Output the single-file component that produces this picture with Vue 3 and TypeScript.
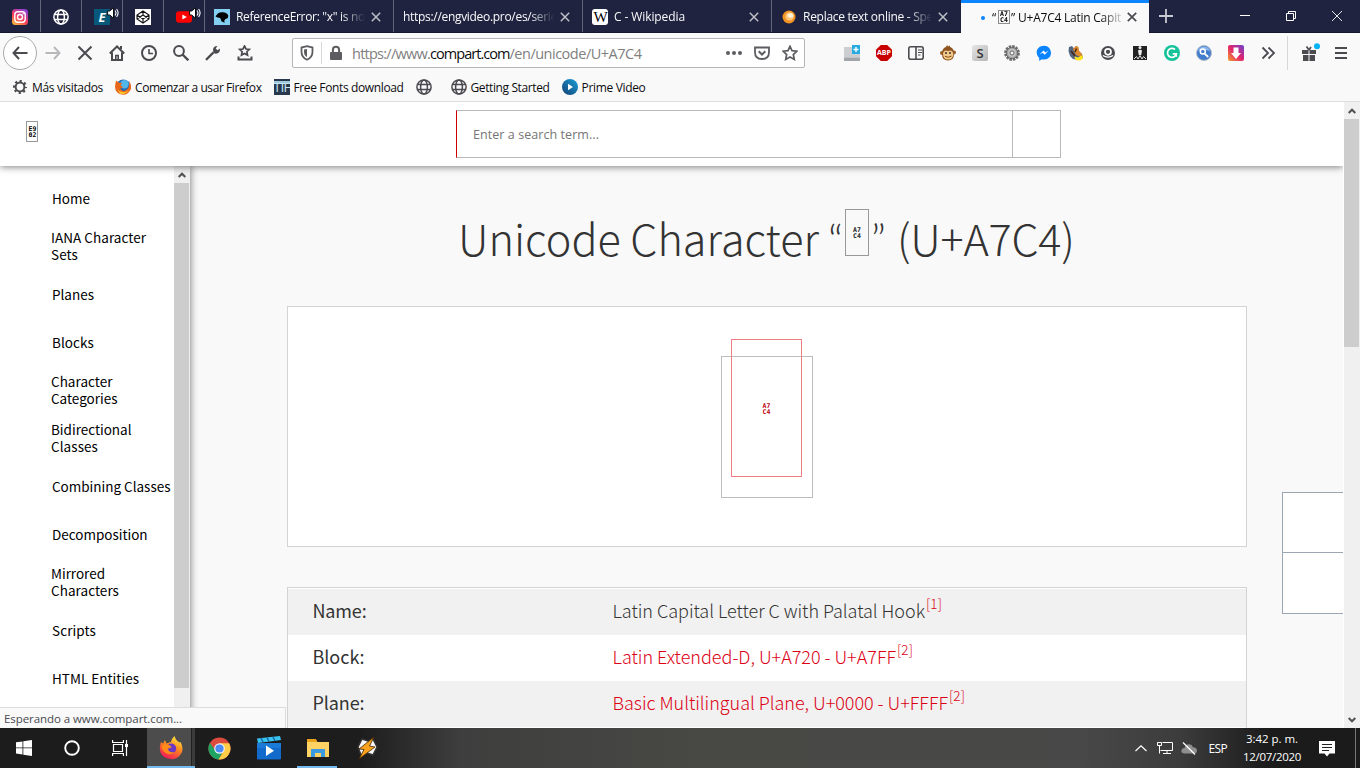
<script setup lang="ts">
import type { ObjectDirective } from 'vue'

// Spreads a label's letters so that it takes the given width in pixels.
const vFit: ObjectDirective<HTMLElement, number> = {
  mounted(el, binding) {
    const natural = el.getBoundingClientRect().width
    const count = (el.textContent ?? '').trim().length
    if (count > 0) el.style.letterSpacing = `${(binding.value - natural) / count}px`
  },
}

interface Tab { id: string; title: string; width: number }
const tabs: Tab[] = [
  { id: 'js', title: 'ReferenceError: "x" is not', width: 133 },
  { id: 'plain', title: 'https://engvideo.pro/es/serie', width: 154 },
  { id: 'wiki', title: 'C - Wikipedia', width: 71 },
  { id: 'orange', title: 'Replace text online - Spe', width: 130 },
]

interface MenuItem { lines: { text: string; width: number }[] }
const one = (text: string, width: number): MenuItem => ({ lines: [{ text, width }] })
const two = (a: string, aw: number, b: string, bw: number): MenuItem => ({
  lines: [{ text: a, width: aw }, { text: b, width: bw }],
})
const menu: MenuItem[] = [
  one('Home', 38),
  two('IANA Character', 95, 'Sets', 27),
  one('Planes', 42),
  one('Blocks', 42),
  two('Character', 61.5, 'Categories', 66.5),
  two('Bidirectional', 80.5, 'Classes', 47),
  one('Combining Classes', 118.5),
  one('Decomposition', 95.5),
  two('Mirrored', 54, 'Characters', 68),
  one('Scripts', 44),
  one('HTML Entities', 87),
]

const rows = [
  { label: 'Name:', lw: 54, value: 'Latin Capital Letter C with Palatal Hook', vw: 312.5, note: '[1]', link: false },
  { label: 'Block:', lw: 52, value: 'Latin Extended-D, U+A720 - U+A7FF', vw: 283.5, note: '[2]', link: true },
  { label: 'Plane:', lw: 52, value: 'Basic Multilingual Plane, U+0000 - U+FFFF', vw: 335.5, note: '[2]', link: true },
]
</script>

<template>
  <div class="screen">
    <div class="tabbar">
      <div class="pin">
        <svg width="16" height="16" viewBox="0 0 16 16">
          <defs>
            <linearGradient id="ig" x1="0.2" y1="1" x2="0.8" y2="0">
              <stop offset="0" stop-color="#ffb83f" /><stop offset=".4" stop-color="#fb3f57" /><stop offset="1" stop-color="#8a3fdc" />
            </linearGradient>
          </defs>
          <rect width="16" height="16" rx="3.5" fill="url(#ig)" />
          <rect x="2.8" y="2.8" width="10.4" height="10.4" rx="3" fill="none" stroke="#fff" stroke-width="1.4" />
          <circle cx="8" cy="8" r="2.5" fill="none" stroke="#fff" stroke-width="1.4" /><circle cx="11.2" cy="4.8" r=".7" fill="#fff" />
        </svg>
      </div>
      <div class="pin">
        <svg width="16" height="16" viewBox="0 0 16 16" fill="none" stroke="#fff" stroke-width="1.5">
          <circle cx="8" cy="8" r="7.1" /><ellipse cx="8" cy="8" rx="3.4" ry="7.1" /><path d="M1.5 5.5h13M1.5 10.5h13" />
        </svg>
      </div>
      <div class="pin">
        <span class="letter-e">E</span>
        <svg class="sound" width="12" height="12" viewBox="0 0 12 12"><path d="M.6 4h2.2L6.5.8v10.4L2.800 8H.6z" fill="#fff" stroke="#000" stroke-width=".9" /><path d="M8 3.5q2 2.5 0 5M9.600 2q3 4 0 8" fill="none" stroke="#fff" stroke-width="1.1" /></svg>
      </div>
      <div class="pin">
        <svg width="16" height="16" viewBox="0 0 16 16">
          <rect width="16" height="16" fill="#fff" />
          <path d="M8 2l6 4v4l-6 4-6-4V6zM8 2v4m0 4v4M2 6l6 4 6-4M2 10l6-4 6 4" fill="none" stroke="#111" stroke-width="1.1" />
        </svg>
      </div>
      <div class="pin">
        <svg width="16" height="16" viewBox="0 0 16 16"><rect y="2.3" width="16" height="11.4" rx="3" fill="#f00" /><path d="M6.4 5.4v5.2L10.8 8z" fill="#fff" /></svg>
        <svg class="sound" width="12" height="12" viewBox="0 0 12 12"><path d="M.6 4h2.2L6.5.8v10.4L2.800 8H.6z" fill="#fff" stroke="#000" stroke-width=".9" /><path d="M8 3.5q2 2.5 0 5M9.600 2q3 4 0 8" fill="none" stroke="#fff" stroke-width="1.1" /></svg>
      </div>
      <div v-for="t in tabs" :key="t.id" class="tab" :class="{ last: t.id === 'orange' }">
        <svg v-if="t.id === 'js'" class="fav" width="16" height="16" viewBox="0 0 16 16"><rect width="16" height="16" fill="#83d0f2" /><path d="M1.5 7.5Q4 3 8 3.2q5-.3 6.3 3.6l-.6 2.4-2.2.8-1.2 1.4.3 2.3-3.2-1.4L6.2 9 3.6 8.6z" fill="#000" /></svg>
        <svg v-else-if="t.id === 'orange'" class="fav" width="16" height="16" viewBox="0 0 16 16"><circle cx="8" cy="8" r="6.5" fill="#f39422" /><circle cx="8.6" cy="7.4" r="4.2" fill="#ffc77c" /><ellipse cx="9.5" cy="6.5" rx="2.8" ry="2.2" fill="#fff3d8" /></svg>
        <span v-else-if="t.id === 'wiki'" class="fav wiki">W</span>
        <span class="clip"><span v-fit="t.width" class="label">{{ t.title }}</span></span>
        <svg class="close" width="10" height="10" viewBox="0 0 10 10"><path d="M.8.8l8.4 8.4M9.2.8L.8 9.2" stroke="#bdbec6" stroke-width="1.5" /></svg>
      </div>
      <div class="tab active">
        <i class="dot"></i>
        <span class="clip"><span v-fit="5" class="label">“</span><span class="missing tiny">A7<br>C4</span><span v-fit="6" class="label">”</span><span v-fit="103" class="label after">U+A7C4 Latin Capit</span></span>
        <svg class="close" width="10" height="10" viewBox="0 0 10 10"><path d="M.8.8l8.4 8.4M9.2.8L.8 9.2" stroke="#4a4a4f" stroke-width="1.7" /></svg>
      </div>
      <svg class="plus" width="14" height="14" viewBox="0 0 14 14"><path d="M7 0v14M0 7h14" stroke="#c9c9d1" stroke-width="1.8" /></svg>
      <div class="window-buttons">
        <svg width="10" height="10" viewBox="0 0 10 10" fill="none" stroke="#fff"><path d="M0 4.5h10" /></svg>
        <svg width="10" height="10" viewBox="0 0 10 10" fill="none" stroke="#fff"><path d="M.5 2.5h7v7h-7zM2.5 2.500V.5h7v7h-2" /></svg>
        <svg width="10" height="10" viewBox="0 0 10 10" fill="none" stroke="#fff"><path d="M0 0l10 10M10 0L0 10" stroke-width=".9" /></svg>
      </div>
    </div>

    <div class="navbar">
      <div class="back"><svg width="16" height="16" viewBox="0 0 16 16" fill="none" stroke="#4a4a4f" stroke-width="2"><path d="M15.500 8H1.500M7 2L1.500 8 7 14" /></svg></div>
      <div class="tools">
        <svg viewBox="0 0 16 16" fill="none" stroke="#b8b8bb" stroke-width="2"><path d="M.5 8h14M9 2l5.500 6L9 14" /></svg>
        <svg viewBox="0 0 16 16" fill="none" stroke="#4a4a4f" stroke-width="2"><path d="M1.500 1.500l13 13M14.500 1.500l-13 13" /></svg>
        <svg viewBox="0 0 16 16" fill="none" stroke="#4a4a4f" stroke-width="2"><path d="M.8 8.500L8 1.500l7.200 7M3 7.500V15h10V7.500" /><path d="M12 1v3" /><path d="M6.800 15v-4.500h2.400V15" stroke-width="1.600" /></svg>
        <svg viewBox="0 0 16 16" fill="none" stroke="#4a4a4f" stroke-width="2"><circle cx="8" cy="8" r="7" /><path d="M8 4v4.500h4" stroke-width="1.600" /></svg>
        <svg viewBox="0 0 16 16" fill="none" stroke="#4a4a4f" stroke-width="2"><circle cx="6" cy="6" r="4.900" /><path d="M9.500 9.500l5.800 5.800" stroke-width="2.300" /></svg>
        <svg viewBox="0 0 16 16"><path d="M1 14.900L8.500 7.400" stroke="#4a4a4f" stroke-width="2.200" /><path d="M8 5Q8 1.200 12.500 1L10.700 3.400l1.800 1.800L15 3.500q.2 4.700-4 5.300-2.800.2-3-3.800" fill="#4a4a4f" /></svg>
        <svg viewBox="0 0 16 16" fill="none" stroke="#4a4a4f" stroke-width="1.700"><path d="M7.500 1l1.500 3 3.300.4L9.900 6.700l.6 3.400-3-1.700-3 1.700.6-3.400-2.400-2.300L6 4z" /><path d="M1.500 11.500v3h13v-3" stroke-width="2" /></svg>
      </div>
      <div class="url">
        <svg class="shield" viewBox="0 0 16 16"><path d="M8 1.200l5.500 1.300v4.300q0 5.500-5.500 8-5.500-2.500-5.500-8V2.500z" fill="none" stroke="#5d5d61" stroke-width="1.800" /><path d="M8 4v8Q5 10.500 5 7V4.600z" fill="#5d5d61" /></svg>
        <i class="rule"></i>
        <svg class="lock" viewBox="0 0 16 16"><rect x="2" y="7" width="12" height="8" rx="1" fill="#5d5d61" /><path d="M4.900 8V5q0-3.200 3.100-3.200T11.100 5v3" fill="none" stroke="#5d5d61" stroke-width="2" /></svg>
        <span class="address"><span v-fit="78">https://www.</span><b v-fit="79.5">compart.com</b><span v-fit="132">/en/unicode/U+A7C4</span></span>
        <svg class="dots" viewBox="0 0 16 16" fill="#5d5d61"><circle cx="2" cy="8" r="2" /><circle cx="8" cy="8" r="2" /><circle cx="14" cy="8" r="2" /></svg>
        <svg viewBox="0 0 16 16" fill="none" stroke="#5d5d61" stroke-width="1.800"><path d="M1 2.500h14v4.700q0 6.600-7 6.800-7-.2-7-6.800z" /><path d="M4.700 6.300L8 9.500l3.300-3.200" stroke-width="2" /></svg>
        <svg viewBox="0 0 16 16" fill="none" stroke="#5d5d61" stroke-width="1.700"><path d="M8 1.300l2 4.400 4.900.5-3.600 3.300 1 4.900L8 12l-4.300 2.400 1-4.900L1.100 6.200 6 5.700z" /></svg>
      </div>
      <div class="extensions">
        <svg viewBox="0 0 16 16"><path d="M0 2h16v10.500H0z" fill="#ccced1" /><path d="M0 12.500h16V16H0z" fill="#a2a5aa" /><path d="M8 0h8v9H8z" fill="#26ace2" /><path d="M12 2v5M9.500 4.500h5" stroke="#fff" stroke-width="1.400" /></svg>
        <span class="abp">ABP</span>
        <svg viewBox="0 0 16 16" fill="none" stroke="#4a4a4f" stroke-width="1.600"><rect x=".8" y="1.800" width="14.400" height="12.400" rx="2" /><path d="M8 2v12" /><path d="M10 5h4M10 7.500h4M10 10h2.500" stroke-width="1" /></svg>
        <svg viewBox="0 0 16 16"><circle cx="2" cy="8" r="2" fill="#9b6029" /><circle cx="14" cy="7.500" r="2" fill="#9b6029" /><path d="M2 9Q2 3 6 2L7 0l1 1.500L10 .5V2q4 1 4 7 0 6.500-6 6.500T2 9" fill="#8e541f" /><path d="M3 8.500q1-4.500 5-2.500 4-2 5.300 2.500 0 6-5.300 6-5 0-5-6" fill="#f2c98c" /><path d="M6 7v2M10 7v2" stroke="#222" stroke-width="1.300" /><path d="M5 11.300q3 2 6.500-.2" fill="none" stroke="#87500d" /></svg>
        <span class="s-icon">S</span>
        <svg viewBox="0 0 16 16"><circle cx="8" cy="8" r="6.600" fill="none" stroke="#6c6e70" stroke-width="2.600" stroke-dasharray="2.456 1" /><circle cx="8" cy="8" r="5.800" fill="#a0a0a0" stroke="#666" /><circle cx="8" cy="8" r="4" fill="#c4c4c4" /><circle cx="8" cy="8" r="2" fill="#f4f4f4" stroke="#666" /></svg>
        <svg viewBox="0 0 16 16"><path d="M8 .8c-4.300 0-7.300 2.900-7.300 6.700 0 2.200 1 4 2.500 5.200V16l2.600-1.700q5 .9 7.600-2c3.500-4 1-11.500-5.400-11.500" fill="#0a84ff" /><path d="M3.500 9.600l4-4.200 2 2 3.200-1.800-4 4.200-2-2z" fill="#fff" /></svg>
        <svg viewBox="0 0 16 16"><path d="M1 2l3-1 2 2.500L8 1l2 1 1 4 3 3 1 4-4 2-6-1-3-3L.5 6z" fill="#52677f" /><path d="M5 4l3-3 2.500 1 .5 4 3 3-1 3-5-2z" fill="#e08a2c" /><path d="M3 6l4 5M8.500 3.500L7 7" stroke="#4a2413" stroke-width="1.500" /><path d="M6.500 11.500l3.500 1 4.500-2.500q1.500 5-3.500 5.500-4.500 0-4.500-4" fill="#ffe51b" /></svg>
        <svg viewBox="0 0 16 16"><circle cx="8" cy="8" r="7" fill="#4a4a4f" /><circle cx="8" cy="6.800" r="3" fill="none" stroke="#fff" stroke-width="1.700" /><path d="M2.800 10.500q5 3.200 10.400 0" fill="none" stroke="#fff" stroke-width="1.400" /></svg>
        <svg viewBox="0 0 16 16"><rect x="1" y="1" width="14" height="14" fill="#222" /><circle cx="8" cy="2.500" r="1.500" fill="#eee" /><path d="M6 5.500L8 4.500l2 1-.8 4.500H6.800z" fill="#eee" /><path d="M2 14l2.500-2.500L6 14l2-3.500 2 3.500 1.500-2.500L14 14" fill="none" stroke="#ddd" stroke-width="1" /></svg>
        <svg viewBox="0 0 16 16"><circle cx="8" cy="8" r="8" fill="#15c39a" /><path d="M11 4.500A4.500 4.500 0 1 0 12.400 8.800H8.700m3.500-.5v3.400" fill="none" stroke="#fff" stroke-width="1.700" /></svg>
        <svg viewBox="0 0 16 16"><circle cx="8" cy="8" r="7.500" fill="#427dcc" stroke="#b3bdc9" /><path d="M2 6q1-4 6-4.400 5 .4 6 4.400-6-2-12 0" fill="#88b6ed" /><circle cx="6.800" cy="6.600" r="2.500" fill="none" stroke="#fff" stroke-width="1.500" /><path d="M8.700 8.600l3.500 3.400" stroke="#fff" stroke-width="1.800" /></svg>
        <svg viewBox="0 0 16 16"><defs><linearGradient id="dl" x1="0" y1="1" x2="1" y2="0"><stop offset="0" stop-color="#f7a02c" /><stop offset=".5" stop-color="#e1246b" /><stop offset="1" stop-color="#6d42d2" /></linearGradient></defs><rect width="16" height="16" rx="2" fill="url(#dl)" /><path d="M5.500 2.500h5V8H13l-5 6-5-6h2.500z" fill="#fff" /></svg>
        <svg viewBox="0 0 16 16" fill="none" stroke="#4a4a4f" stroke-width="1.800"><path d="M2.500 2.500L8 8l-5.500 5.500M8.500 2.500L14 8l-5.500 5.500" /></svg>
      </div>
      <i class="nav-rule"></i>
      <svg class="gift" viewBox="0 0 20 20"><path d="M2 7h6.500v4H2zM9.500 7H16v4H9.500zM3 12h5.500v6H3zM9.500 12H15v6H9.500z" fill="#4a4a4f" /><path d="M9 7L6.500 3.500M9 7l2-3" stroke="#4a4a4f" stroke-width="1.700" /><circle cx="17" cy="3.300" r="3" fill="#00b3f4" /></svg>
      <svg class="burger" width="12" height="12" viewBox="0 0 12 12"><path d="M0 1h12M0 6h12M0 11h12" stroke="#4a4a4f" stroke-width="1.800" /></svg>
    </div>

    <div class="bookmarks">
      <div class="mark"><svg viewBox="0 0 16 16"><circle cx="8" cy="8" r="4.400" fill="none" stroke="#4a4a4f" stroke-width="2" /><circle cx="8" cy="8" r="5.900" fill="none" stroke="#4a4a4f" stroke-width="2.300" stroke-dasharray="2.100 2.534" stroke-dashoffset="1.050" /></svg><span v-fit="71">Más visitados</span></div>
      <div class="mark"><svg viewBox="0 0 16 16"><circle cx="8.300" cy="7.600" r="7.200" fill="#246bb5" /><circle cx="9.500" cy="5.200" r="4.200" fill="#53b6e8" /><path d="M1 1.500Q3 4 7 4L5.600 6.500 8 8q-2 2-3 1.500 3 4.500 7.500.5Q15 7 14 2q3.500 5 1.200 9.500Q12 16.500 6.500 15.600-.8 13.600.2 6z" fill="#e9651a" /><path d="M2 10q5 6 12 1-4 5.500-9 3.500" fill="#ffc62d" /></svg><span v-fit="126.5">Comenzar a usar Firefox</span></div>
      <div class="mark"><span class="ttf">TTF</span><span v-fit="110">Free Fonts download</span></div>
      <div class="mark lone"><svg viewBox="0 0 16 16" fill="none" stroke="#4a4a4f" stroke-width="1.500"><circle cx="8" cy="8" r="7.100" /><ellipse cx="8" cy="8" rx="3.400" ry="7.100" /><path d="M1.500 5.500h13M1.500 10.500h13" /></svg></div>
      <div class="mark"><svg viewBox="0 0 16 16" fill="none" stroke="#4a4a4f" stroke-width="1.500"><circle cx="8" cy="8" r="7.100" /><ellipse cx="8" cy="8" rx="3.400" ry="7.100" /><path d="M1.500 5.500h13M1.500 10.500h13" /></svg><span v-fit="79">Getting Started</span></div>
      <div class="mark"><svg viewBox="0 0 16 16"><defs><linearGradient id="pv" x1="0" y1="1" x2="1" y2="0"><stop offset="0" stop-color="#143f73" /><stop offset="1" stop-color="#1aa0d8" /></linearGradient></defs><circle cx="8" cy="8" r="8" fill="url(#pv)" /><path d="M6 4.800v6.400L11 8z" fill="#fff" /></svg><span v-fit="64">Prime Video</span></div>
    </div>

    <div class="viewport">
      <div class="page">
        <header class="site-header">
          <span class="missing logo">E9<br>02</span>
          <div class="search"><span v-fit="126" class="placeholder">Enter a search term...</span><i class="go"></i></div>
        </header>
        <div class="body">
          <aside class="sidebar">
            <nav>
              <div v-for="(m, i) in menu" :key="i" class="item" :class="{ pair: m.lines.length > 1 }">
                <div v-for="l in m.lines" :key="l.text" class="line"><span v-fit="l.width">{{ l.text }}</span></div>
              </div>
            </nav>
            <div class="scroll inner"><div class="arrow"><svg width="8" height="6" viewBox="0 0 8 6"><path d="M.7 5L4 1.700 7.300 5" fill="none" stroke="#505050" stroke-width="2" /></svg></div><div class="thumb"></div></div>
          </aside>
          <main>
            <h1><span v-fit="360" class="t1">Unicode Character</span><span class="quote open-quote">“</span><span class="missing mid">A7<br>C4</span><span class="quote">”</span><span v-fit="177.5" class="t2">(U+A7C4)</span></h1>
            <section class="preview">
              <div class="outer"><div class="missing big">A7<br>C4</div></div>
            </section>
            <section class="facts">
              <div v-for="r in rows" :key="r.label" class="fact">
                <div class="name"><span v-fit="r.lw">{{ r.label }}</span></div>
                <div class="value" :class="{ link: r.link }"><span v-fit="r.vw">{{ r.value }}</span><sup v-fit="16">{{ r.note }}</sup></div>
              </div>
            </section>
          </main>
        </div>
        <div class="float"><div></div><div></div></div>
      </div>
      <div class="scroll outer-scroll">
        <div class="arrow"><svg width="8" height="6" viewBox="0 0 8 6"><path d="M.7 5L4 1.700 7.300 5" fill="none" stroke="#505050" stroke-width="2" /></svg></div>
        <div class="thumb"></div>
        <div class="arrow down"><svg width="8" height="6" viewBox="0 0 8 6"><path d="M.7 1L4 4.300 7.300 1" fill="none" stroke="#505050" stroke-width="2" /></svg></div>
      </div>
      <div class="status"><span v-fit="178">Esperando a www.compart.com...</span></div>
    </div>

    <div class="taskbar">
      <div class="task"><svg width="16" height="16" viewBox="0 0 16 16" fill="#fff"><path d="M0 2.300l6.500-.9v6.100H0zM7.300 1.300L16 0v7.500H7.300zM0 8.300h6.500v6.200L0 13.600zM7.300 8.300H16V16l-8.700-1.300z" /></svg></div>
      <div class="task"><svg width="16" height="16" viewBox="0 0 16 16"><circle cx="8" cy="8" r="6.800" fill="none" stroke="#fff" stroke-width="1.900" /></svg></div>
      <div class="task"><svg width="17" height="16" viewBox="0 0 17 16" fill="none" stroke="#fff" stroke-width="1.200"><path d="M1.500 4.500h9v7h-9zM.6 0v2.500h10.800V0M.6 16v-2.500h10.800V16M14.500 0v16" /><path d="M13 4h3v3h-3z" fill="#fff" stroke="none" /></svg></div>
      <div class="task current">
        <svg width="24" height="24" viewBox="0 0 24 24"><defs><linearGradient id="fx" x1=".8" y1="0" x2=".3" y2="1"><stop offset="0" stop-color="#fff044" /><stop offset=".45" stop-color="#ff8a1e" /><stop offset="1" stop-color="#f0155c" /></linearGradient></defs><path d="M2 6l2 1.500L6 4l1.500 3.500L12 6q1-4 3.500-6 1 4 5 6.500l1-.5q3.500 6 1 11Q18.500 24 11.500 23 1.500 22 .8 13 .8 9 2 6" fill="url(#fx)" /><circle cx="12.200" cy="12.500" r="5" fill="#6b37c5" /><path d="M3 9q5-1.500 8 .5l2 1.800-4.200 1.500q1 4.500 7 3.200-5 4-9.500.8Q2 13 3 9" fill="#ff8b19" /></svg>
        <i></i>
      </div>
      <div class="task wide"><svg width="23" height="23" viewBox="0 0 24 24"><circle cx="12" cy="12" r="11.500" fill="#dd4b3e" /><path d="M2 6.200A11.500 11.500 0 0 0 11 23.500l5-9-8 0z" fill="#1da462" /><path d="M12 6.500h10A11.500 11.500 0 0 1 11 23.500l5.500-9z" fill="#ffcd46" /><circle cx="12" cy="12" r="5.500" fill="#f5f5f5" /><circle cx="12" cy="12" r="4.300" fill="#4c8bf5" /></svg></div>
      <div class="task wide"><svg width="24" height="24" viewBox="0 0 24 24"><path d="M0 7h24v15.500q0 1-1 1H1q-1 0-1-1z" fill="#126bca" /><path d="M0 2.500L23 0l1 4L1 7z" fill="#38c4ee" /><path d="M4 2l2 4M10 1.500l2 4M16 1l2 4" stroke="#176bae" stroke-width="1.500" /><path d="M0 7h24v5H0z" fill="#1b7ad8" /><path d="M9 9.500v10.500l8-5.200z" fill="#fff" /></svg></div>
      <div class="task wide open"><svg width="22" height="19" viewBox="0 0 22 19"><path d="M0 1h9l1.500 2H22v15H0z" fill="#ffd363" /><path d="M0 0h9l1 3H0z" fill="#e9a21b" /><path d="M4 10h14v8h-4v-4H8v4H4z" fill="#3c9be0" /></svg></div>
      <div class="task wide"><svg width="24" height="24" viewBox="0 0 24 24"><path d="M7 3l6 2 5-2 4 8-4 8-6-2-6 2-3-8z" fill="#f6f6f6" stroke="#333" stroke-width="1.500" /><path d="M19 1L4 13l5 .5L4 23l16-12-5.500-1z" fill="#f8a21d" stroke="#432200" stroke-width=".8" /></svg></div>
      <div class="tray">
        <svg width="12" height="7" viewBox="0 0 12 7"><path d="M.5 6L6 .8 11.500 6" fill="none" stroke="#fff" stroke-width="1.200" /></svg>
        <svg class="net" width="16" height="14" viewBox="0 0 16 14" fill="none" stroke="#fff"><path d="M5.500 1.500h10v8H3.500M10 9.500v3M6 12.500h8M2.500 5v7.500M.5 1.500h4v3h-4z" /></svg>
        <svg class="cloud" width="16" height="13" viewBox="0 0 16 13"><path d="M3 11.500q-3-.5-2.600-3.200Q1 6 3.500 6 4.500 2 8 2.200q3 .2 4 3 3.500 0 4 3.200 0 3-3 3.100z" fill="#8f8f8f" /><path d="M2 .5l12 12" stroke="#fff" stroke-width="1.300" /></svg>
        <span v-fit="18.5" class="esp">ESP</span>
        <div class="clock"><div><span v-fit="52">3:42 p. m.</span></div><div><span v-fit="58">12/07/2020</span></div></div>
        <svg class="notes" width="16" height="16" viewBox="0 0 16 16"><path d="M0 0h16v12.500h-5.500L8 15.500l-2.500-3H0z" fill="#fff" /><path d="M3 3.500h10M3 6.500h10M3 9.500h7" stroke="#222" /></svg>
        <i class="peek"></i>
      </div>
    </div>
  </div>
</template>

<style>
body { margin: 0; overflow: hidden; }
</style>

<style scoped>
* { box-sizing: border-box; }
.screen { width: 1360px; height: 768px; display: flex; flex-direction: column; overflow: hidden; font-family: "Open Sans", "Noto Sans", sans-serif; font-size: 12px; color: #0c0c0d; }
.screen span, .screen b, .screen sup { white-space: nowrap; }
svg { flex: none; display: block; }

.tabbar { height: 33px; flex: none; display: flex; background: #202340; border-bottom: 1px solid #15172c; }
.pin { width: 41px; height: 32px; border-right: 1px solid #63657a; display: flex; align-items: center; justify-content: center; padding-top: 2px; position: relative; flex: none; }
.letter-e { width: 16px; height: 16px; background: #07587a; color: #fff; font: italic 700 13px/16px "Open Sans", sans-serif; text-align: center; }
.sound { position: absolute; left: 25px; top: 7px; }
.tab { width: 189px; height: 32px; flex: none; border-right: 1px solid #63657a; display: flex; align-items: center; padding: 2px 12px 0 9px; color: #f9f9fa; }
.fav { width: 16px; height: 16px; flex: none; margin-right: 6px; }
.wiki { background: #fff; border-radius: 3px; color: #000; font: 15px/16px "Liberation Serif", serif; text-align: center; letter-spacing: -1px; }
.clip { flex: 1; overflow: hidden; display: flex; align-items: center; height: 20px; margin-right: 1px; mask-image: linear-gradient(to right, #000 calc(100% - 24px), transparent); }
.label { display: inline-block; line-height: 18px; }
.close { margin-left: 5px; }
.last { border-right: 0; padding-right: 13px; }
.active { width: 188px; height: 33px; background: #f9f9fa; border-right: 0; border-top: 3px solid #0a84ff; padding: 0 12px 1px 20px; color: #0c0c0d; }
.active .clip { mask-image: linear-gradient(to right, #000 calc(100% - 20px), rgba(0, 0, 0, .2)); }
.active .close { margin-top: -1px; }
.dot { width: 4px; height: 4px; border-radius: 50%; background: #0a84ff; margin-right: 7px; flex: none; }
.after { margin-left: 1px; }
.missing { flex: none; text-align: center; font-family: "DejaVu Sans Mono", monospace; font-size: 6.5px; line-height: 6px; font-weight: 700; border: 1px solid #8d8d8d; color: #000; display: inline-flex; align-items: center; justify-content: center; }
.tiny { width: 12px; height: 14px; margin: -2px 1px 0; }
.plus { margin: 9px 0 0 10px; }
.window-buttons { display: flex; gap: 36px; margin: 11px 18px 0 auto; }

.navbar { height: 40px; flex: none; background: #f9f9fa; display: flex; align-items: center; }
.back { width: 34px; height: 34px; border: 1px solid #aaa; border-radius: 50%; background: #fff; display: flex; align-items: center; justify-content: center; margin-left: 3px; flex: none; }
.tools { display: flex; gap: 16px; margin-left: 8px; }
.tools svg, .url svg, .extensions svg { width: 16px; height: 16px; }
.url { width: 513px; height: 30px; margin-left: 39px; border: 1px solid #b5b5b5; border-radius: 2px; background: #fff; display: flex; align-items: center; padding: 0 6px 0 6px; flex: none; }
.rule { width: 1px; height: 22px; background: #d7d7db; margin: 0 6px 0 6px; }
.address { flex: 1; margin-left: 8px; font-size: 14.5px; color: #808080; display: flex; }
.address b { font-weight: 400; color: #0c0c0d; }
.url svg + svg { margin-left: 12px; }
.extensions { display: flex; gap: 16px; margin-left: 39px; }
.abp, .s-icon { width: 16px; height: 16px; text-align: center; font: 700 7px/16px "Open Sans", sans-serif; color: #fff; }
.abp { background: #c80000; clip-path: polygon(30% 0, 70% 0, 100% 30%, 100% 70%, 70% 100%, 30% 100%, 0 70%, 0 30%); }
.s-icon { background: linear-gradient(135deg, #e6e6e6, #b4b4b4); border-radius: 2px; color: #333; font-size: 13px; font-weight: 600; }
.nav-rule { width: 1px; height: 34px; background: #d7d7db; margin-left: 11px; }
.gift { width: 20px; height: 20px; margin-left: 12px; }
.burger { margin-left: 15px; }

.bookmarks { height: 29px; flex: none; background: #f9f9fa; border-bottom: 1px solid #ddd; display: flex; padding: 0 0 0 12px; gap: 12px; align-items: center; }
.mark { display: flex; align-items: center; gap: 4px; }
.mark svg { width: 16px; height: 16px; }
.lone { margin: 0 7px 0 0; }
.ttf { width: 16px; height: 16px; background: #29394d; color: #c5e5f5; border-top: 2px solid #29394d; font: 400 12px/14px "Liberation Sans", sans-serif; letter-spacing: -2.2px; overflow: hidden; text-align: left; box-shadow: inset 0 2px #9fc9dd; }

.viewport { flex: 1; min-height: 0; display: flex; position: relative; background: #fff; }
.page { width: 1343px; display: flex; flex-direction: column; background: #f9f9f9; position: relative; font-family: "Noto Sans CJK SC", sans-serif; overflow: hidden; }
.site-header { height: 64px; flex: none; background: #fff; box-shadow: 0 1px 7px rgba(0, 0, 0, .5); z-index: 2; display: flex; align-items: flex-start; }
.logo { width: 12px; height: 21px; margin: 19px 0 0 26px; padding-left: 1px; border-color: #999; }
.search { width: 605px; height: 48px; margin: 8px 0 0 418px; border: 1px solid #b9b9b9; border-left-color: #c00; display: flex; align-items: center; }
.placeholder { margin-left: 16px; font: 12.5px "Open Sans", sans-serif; color: #757575; }
.go { margin-left: auto; width: 48px; height: 46px; border-left: 1px solid #b9b9b9; }
.body { flex: 1; display: flex; min-height: 0; }
.sidebar { width: 190px; background: #fff; flex: none; display: flex; box-shadow: 1px 0 7px rgba(0, 0, 0, .45); }
.sidebar nav { width: 174px; padding-top: 8px; overflow: hidden; height: 562px; }
.item { height: 48px; padding-left: 52px; display: flex; flex-direction: column; justify-content: center; font-size: 13.5px; line-height: 17px; color: #000; }
.line { height: 17px; }
.line span { display: inline-block; height: 17px; vertical-align: top; }
.pair { padding-left: 51px; }
.scroll { background: #f0f0f0; display: flex; flex-direction: column; }
.inner { width: 16px; }
.arrow { height: 17px; display: flex; align-items: center; justify-content: center; flex: none; }
.thumb { width: 15px; background: #cdcdcd; flex: none; }
.inner .thumb { height: 505px; }
.outer-scroll { width: 16px; margin-left: 1px; }
.outer-scroll .thumb { height: 228px; }
.down { margin-top: auto; }
main { width: 960px; margin-left: 97px; }
h1 { margin: 0; height: 140px; display: flex; align-items: flex-start; color: #333; font-size: 43.2px; font-weight: 300; line-height: 62px; padding: 40px 0 0 171px; }
h1 > span { flex: none; }
.t1 { width: 360px; }
.quote { width: 17px; font-family: Lato, sans-serif; font-size: 44px; line-height: 67px; text-align: center; }
.open-quote { margin-left: 9px; }
.mid { width: 24px; height: 47px; margin: 3px 1px 0 1px; border-color: #999; color: #222; }
.t2 { margin-left: 10px; }
.preview { height: 241px; background: #fff; border: 1px solid #d3d3d3; display: flex; justify-content: center; padding-top: 49px; }
.outer { width: 92px; height: 142px; border: 1px solid #bdbdbd; }
.big { width: 71px; height: 138px; margin: -18px 0 0 9px; padding-top: 1px; border-color: #ef7d84; color: #c00010; }
.facts { margin-top: 40px; background: #fff; border: 1px solid #d3d3d3; padding: 1px 0 2px; font-size: 18px; color: #333; }
.fact { height: 46px; display: flex; line-height: 42px; }
.fact:nth-child(odd) { background: #f1f1f1; }
.name { width: 324.5px; padding-left: 24.5px; }
.value { font-weight: 300; display: flex; }
.link, sup { color: #dc0014; }
sup { font-size: 13.5px; line-height: 29px; margin-left: 1px; height: 29px; }
.float { position: absolute; left: 1282px; top: 390px; width: 61px; height: 122px; border: 1px solid #9aa6b1; border-right: 0; background: #fff; }
.float div { height: 59px; }
.float div + div { border-top: 1px solid #9aa6b1; }
.status { position: absolute; left: 0; bottom: 0; z-index: 4; width: 286px; height: 21px; background: #f9f9fa; border-top: 1px solid #dcdcdc; border-right: 1px solid #dcdcdc; padding-left: 4px; line-height: 21px; font-size: 11.5px; color: #4a4a4f; }

.taskbar { height: 40px; flex: none; background: linear-gradient(90deg, #1c1c1c 0, #1d1d1d 360px, #3e3e3e 460px, #484844 700px, #484848 1080px, #3c3c3c 1180px, #1b1b1b 1270px); display: flex; color: #fff; }
.task { width: 48px; height: 40px; display: flex; align-items: center; justify-content: center; flex: none; }
.current { background: #4c4c4c; border-bottom: 2px solid #76b9ed; margin-left: 3px; position: relative; padding-top: 1px; }
.current i { position: absolute; right: 0; top: 0; width: 4px; height: 38px; background: #3b3b3b; border-left: 1px solid #202020; }
.wide { width: 49px; }
.open { position: relative; }
.open::after { content: ""; position: absolute; left: 4px; bottom: 0; width: 40px; height: 2px; background: #76b9ed; }
.tray { margin-left: auto; display: flex; align-items: center; }
.net { margin-left: 10px; }
.cloud { margin-left: 8px; }
.esp { margin-left: 12px; }
.clock { width: 60px; margin-left: 15px; text-align: center; line-height: 18px; font-size: 11.5px; }
.notes { margin: 1px 0 0 17px; }
.peek { width: 1px; height: 40px; background: #777; margin: 0 4px 0 20px; }
</style>
